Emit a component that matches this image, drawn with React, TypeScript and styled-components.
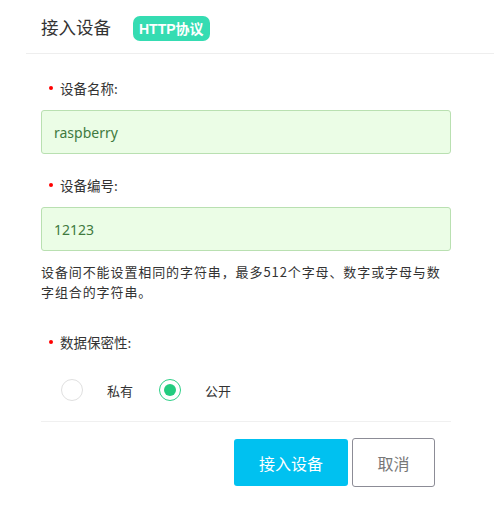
import styled, { createGlobalStyle } from "styled-components";

const GlobalStyle = createGlobalStyle`
  body {
    margin: 0;
    background: #fff;
    font-family: "Noto Sans CJK SC", "Noto Sans", sans-serif;
    color: #333;
  }
`;

const Page = styled.div`
  width: 494px;
`;

const Header = styled.div`
  margin-left: 26px;
  padding-left: 15px;
  height: 53px;
  display: flex;
  align-items: center;
  border-bottom: 1px solid #eeeeee;
`;

const Title = styled.h2`
  margin: 0;
  font-size: 17.5px;
  font-weight: 400;
  color: #333;
  line-height: 24px;
`;

const Badge = styled.span`
  margin-left: 22px;
  margin-top: 3px;
  height: 25px;
  padding: 0 6px;
  border-radius: 7px;
  background: #35dcb2;
  color: #fff;
  font-size: 14px;
  font-weight: 700;
  display: flex;
  align-items: center;
  font-family: "Liberation Sans", "Noto Sans CJK SC", sans-serif;
`;

const Form = styled.div`
  padding: 24px 43px 0 41px;
  display: flex;
  flex-direction: column;
`;

const Label = styled.div<{ $top: number }>`
  margin-top: ${(p) => p.$top}px;
  display: flex;
  align-items: center;
  font-size: 13.5px;
  line-height: 20px;
  padding-left: 8px;

  &::before {
    content: "";
    width: 4px;
    height: 4px;
    border-radius: 50%;
    background: #f00;
    margin-right: 7px;
  }
`;

const Input = styled.input`
  margin-top: 12px;
  box-sizing: border-box;
  width: 410px;
  height: 44px;
  padding: 0 12px;
  background: #ebfde6;
  border: 1px solid #b9e0b1;
  border-radius: 3px;
  color: #3f7a3f;
  font-size: 14px;
  font-family: "Noto Sans", "Noto Sans CJK SC", sans-serif;
  outline: none;
`;

const Help = styled.p`
  margin: 11px 0 0;
  font-size: 13px;
  line-height: 20px;
  letter-spacing: 0.9px;
  color: #333;
`;

const RadioRow = styled.div`
  margin-top: 27px;
  padding-left: 20px;
  display: flex;
  align-items: center;
  height: 22px;
`;

const RadioItem = styled.label`
  display: flex;
  align-items: center;
  margin-right: 26px;
  font-size: 13px;
  cursor: pointer;
`;

const Circle = styled.span<{ $checked?: boolean }>`
  box-sizing: border-box;
  width: 22px;
  height: 22px;
  border-radius: 50%;
  border: 1px solid ${(p) => (p.$checked ? "#2fcf87" : "#e0e0e0")};
  display: flex;
  align-items: center;
  justify-content: center;
  margin-right: 24px;

  &::after {
    content: "";
    display: ${(p) => (p.$checked ? "block" : "none")};
    width: 12px;
    height: 12px;
    border-radius: 50%;
    background: #22cc7f;
  }
`;

const Divider = styled.div`
  margin-top: 20px;
  height: 1px;
  background: #f0f0f0;
`;

const Actions = styled.div`
  margin-top: 16px;
  padding-right: 16px;
  display: flex;
  justify-content: flex-end;
  align-items: center;
  gap: 4px;
`;

const Button = styled.button<{ $primary?: boolean }>`
  box-sizing: border-box;
  width: ${(p) => (p.$primary ? "114px" : "83px")};
  height: ${(p) => (p.$primary ? "47px" : "49px")};
  border-radius: 3px;
  border: ${(p) => (p.$primary ? "none" : "1px solid #8c8c96")};
  background: ${(p) => (p.$primary ? "#00c1f0" : "#fff")};
  color: ${(p) => (p.$primary ? "#fff" : "#777")};
  font-size: 16px;
  font-family: "Noto Sans CJK SC", sans-serif;
  cursor: pointer;
`;

export default function App() {
  return (
    <Page>
      <GlobalStyle />
      <Header>
        <Title>接入设备</Title>
        <Badge>HTTP协议</Badge>
      </Header>
      <Form>
        <Label $top={0}>设备名称:</Label>
        <Input defaultValue="raspberry" />
        <Label $top={21}>设备编号:</Label>
        <Input defaultValue="12123" />
        <Help>设备间不能设置相同的字符串，最多512个字母、数字或字母与数字组合的字符串。</Help>
        <Label $top={30}>数据保密性:</Label>
        <RadioRow>
          <RadioItem>
            <Circle />
            私有
          </RadioItem>
          <RadioItem>
            <Circle $checked />
            公开
          </RadioItem>
        </RadioRow>
        <Divider />
        <Actions>
          <Button $primary>接入设备</Button>
          <Button>取消</Button>
        </Actions>
      </Form>
    </Page>
  );
}
